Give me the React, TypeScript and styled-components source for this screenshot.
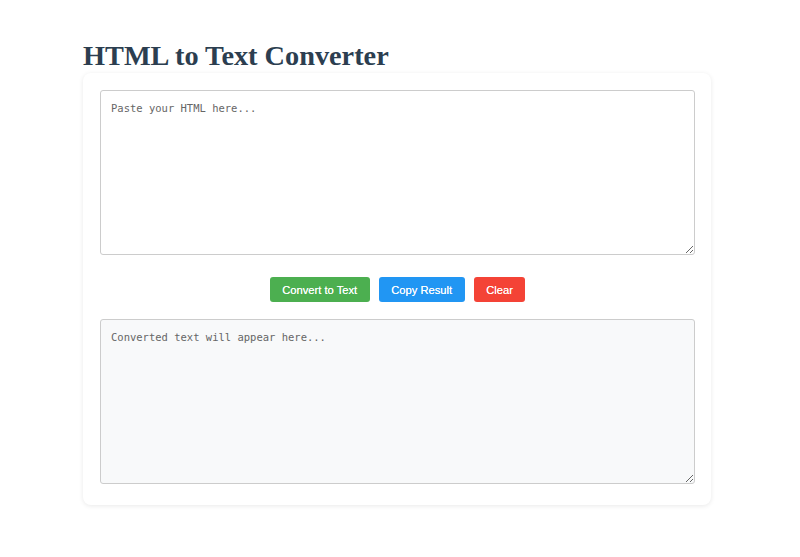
import React, { useState } from "react";
import styled, { createGlobalStyle } from "styled-components";

const GlobalStyle = createGlobalStyle`
  html, body {
    margin: 0;
    padding: 0;
    background: #ffffff;
  }
  body {
    font-family: "Liberation Sans", Arial, sans-serif;
  }
`;

const Page = styled.div`
  padding: 40px 6px 40px 0;
`;

const Container = styled.div`
  max-width: 628px;
  margin: 0 auto;
`;

const Title = styled.h1`
  margin: 0 0 1px;
  font-family: "Liberation Serif", "Times New Roman", serif;
  font-weight: 700;
  font-size: 28.3px;
  line-height: 32px;
  color: #2c3e50;
`;

const Card = styled.div`
  background: #ffffff;
  border-radius: 8px;
  box-shadow: 0 1px 5px rgba(0, 0, 0, 0.09);
  padding: 17px 16px 21px 17px;
`;

const TextBox = styled.textarea<{ $readonly?: boolean }>`
  display: block;
  box-sizing: border-box;
  width: 100%;
  height: 165px;
  padding: 9px 10px;
  border: 1px solid #cccccc;
  border-radius: 3px;
  background: ${(p) => (p.$readonly ? "#f8f9fa" : "#ffffff")};
  font-family: "DejaVu Sans Mono", monospace;
  font-size: 10.5px;
  line-height: 16px;
  color: #333;
  resize: vertical;
  outline: none;

  &::placeholder {
    color: #666666;
  }
`;

const ButtonRow = styled.div`
  display: flex;
  justify-content: center;
  gap: 9px;
  margin: 22px 0 17px;
`;

const Button = styled.button<{ $color: string }>`
  height: 25px;
  padding: 0 12.5px;
  border: none;
  border-radius: 3px;
  background: ${(p) => p.$color};
  color: #ffffff;
  font-family: "Liberation Sans", Arial, sans-serif;
  font-size: 11.2px;
  text-shadow: 0 0 0.4px rgba(255, 255, 255, 0.9);
  cursor: pointer;
`;

function htmlToText(html: string): string {
  const doc = new DOMParser().parseFromString(html, "text/html");
  return (doc.body.textContent || "").trim();
}

export default function App() {
  const [input, setInput] = useState("");
  const [output, setOutput] = useState("");

  return (
    <>
      <GlobalStyle />
      <Page>
        <Container>
          <Title>HTML to Text Converter</Title>
          <Card>
            <TextBox
              placeholder="Paste your HTML here..."
              value={input}
              onChange={(e) => setInput(e.target.value)}
            />
            <ButtonRow>
              <Button $color="#4caf50" onClick={() => setOutput(htmlToText(input))}>
                Convert to Text
              </Button>
              <Button
                $color="#2196f3"
                onClick={() => navigator.clipboard?.writeText(output)}
              >
                Copy Result
              </Button>
              <Button
                $color="#f44336"
                onClick={() => {
                  setInput("");
                  setOutput("");
                }}
              >
                Clear
              </Button>
            </ButtonRow>
            <TextBox
              $readonly
              readOnly
              placeholder="Converted text will appear here..."
              value={output}
            />
          </Card>
        </Container>
      </Page>
    </>
  );
}
